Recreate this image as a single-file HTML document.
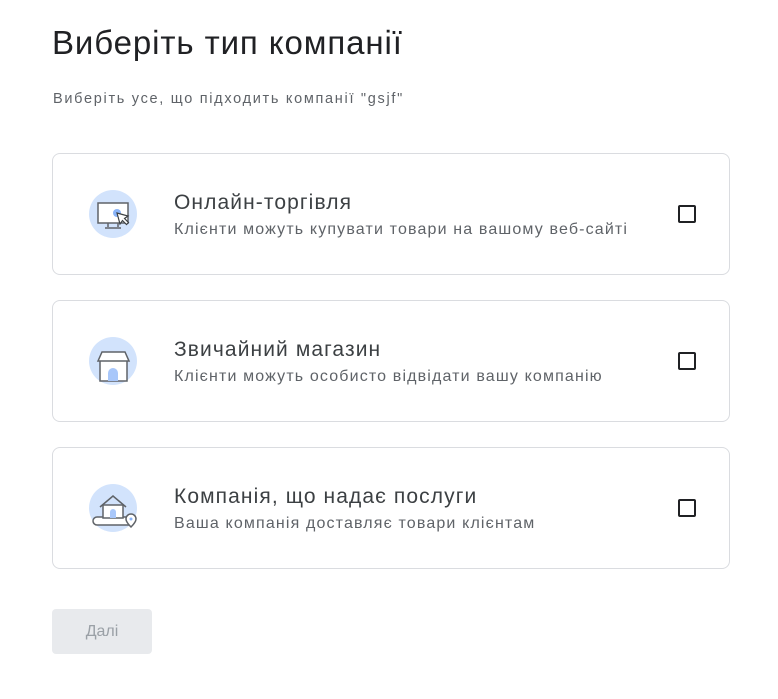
<!DOCTYPE html>
<html><head><meta charset="utf-8"><style>
body{margin:0;background:#fff;font-family:"Liberation Sans",Arial,sans-serif;width:778px;height:699px;overflow:hidden;position:relative}
h1{position:absolute;left:52px;top:24px;margin:0;font-weight:400;font-size:33px;color:#202124;letter-spacing:0.9px}
.sub{position:absolute;left:53px;top:91px;font-size:14.5px;color:#5f6368;letter-spacing:1.7px}
.card{position:absolute;left:52px;width:678px;height:122px;border:1px solid #dadce0;border-radius:8px;box-sizing:border-box}
.card svg{position:absolute;left:36px;top:36px}
.t{position:absolute;left:121px;top:37px;font-size:21px;color:#3c4043;letter-spacing:1.1px}
.d{position:absolute;left:121px;top:67px;font-size:16px;color:#5f6368;letter-spacing:1.15px}
.cb{position:absolute;left:625px;top:51px;width:18px;height:18px;border:2px solid #202124;border-radius:2px;box-sizing:border-box}
.btn{position:absolute;left:52px;top:609px;width:100px;height:45px;background:#e8eaed;border-radius:4px;color:#9aa0a6;font-size:16px;text-align:center;line-height:45px}
</style></head><body>
<h1>Виберіть тип компанії</h1>
<div class="sub">Виберіть усе, що підходить компанії "gsjf"</div>

<div class="card" style="top:153px">
<svg width="50" height="50" viewBox="0 0 50 50"><circle cx="24" cy="24" r="24" fill="#d2e3fc"/>
<rect x="9" y="13" width="30" height="20" fill="#fff" stroke="#5f6368" stroke-width="1.5"/>
<path d="M19 33v4M29 33v4M16 38h16" stroke="#5f6368" stroke-width="1.5" fill="none"/>
<circle cx="28" cy="23" r="4" fill="#8ab4f8"/>
<path d="M28 23l3 11 2.5-3.5 4 4 2-2-4-4 3.5-2.5z" fill="#fff" stroke="#3c4043" stroke-width="1.2"/></svg>
<div class="t">Онлайн-торгівля</div><div class="d">Клієнти можуть купувати товари на вашому веб-сайті</div><div class="cb"></div></div>

<div class="card" style="top:300px">
<svg width="50" height="50" viewBox="0 0 50 50"><circle cx="24" cy="24" r="24" fill="#d2e3fc"/>
<rect x="11" y="22" width="27" height="22" fill="#fff" stroke="#5f6368" stroke-width="1.5"/>
<path d="M9 24l4-9h23l4 9z" fill="#fff" stroke="#5f6368" stroke-width="1.5"/>
<path d="M19 44v-8a5 5 0 0 1 10 0v8z" fill="#a8c7fa"/></svg>
<div class="t">Звичайний магазин</div><div class="d">Клієнти можуть особисто відвідати вашу компанію</div><div class="cb"></div></div>

<div class="card" style="top:447px">
<svg width="52" height="52" viewBox="0 0 52 52"><circle cx="24" cy="24" r="24" fill="#d2e3fc"/>
<rect x="4" y="33" width="40" height="8" rx="4" fill="#fff" stroke="#5f6368" stroke-width="1.5"/>
<rect x="14" y="21" width="20" height="13" fill="#fff" stroke="#5f6368" stroke-width="1.5"/>
<path d="M11 23l13-11 13 11" fill="none" stroke="#5f6368" stroke-width="1.5"/>
<path d="M21 34v-6a3 3 0 0 1 6 0v6z" fill="#a8c7fa"/>
<path d="M42 43c-3-3-5-6-5-8a5 5 0 0 1 10 0c0 2-2 5-5 8z" fill="#fff" stroke="#5f6368" stroke-width="1.5"/>
<circle cx="42" cy="35" r="1.5" fill="#8ab4f8"/></svg>
<div class="t">Компанія, що надає послуги</div><div class="d">Ваша компанія доставляє товари клієнтам</div><div class="cb"></div></div>

<div class="btn">Далі</div>
</body></html>
